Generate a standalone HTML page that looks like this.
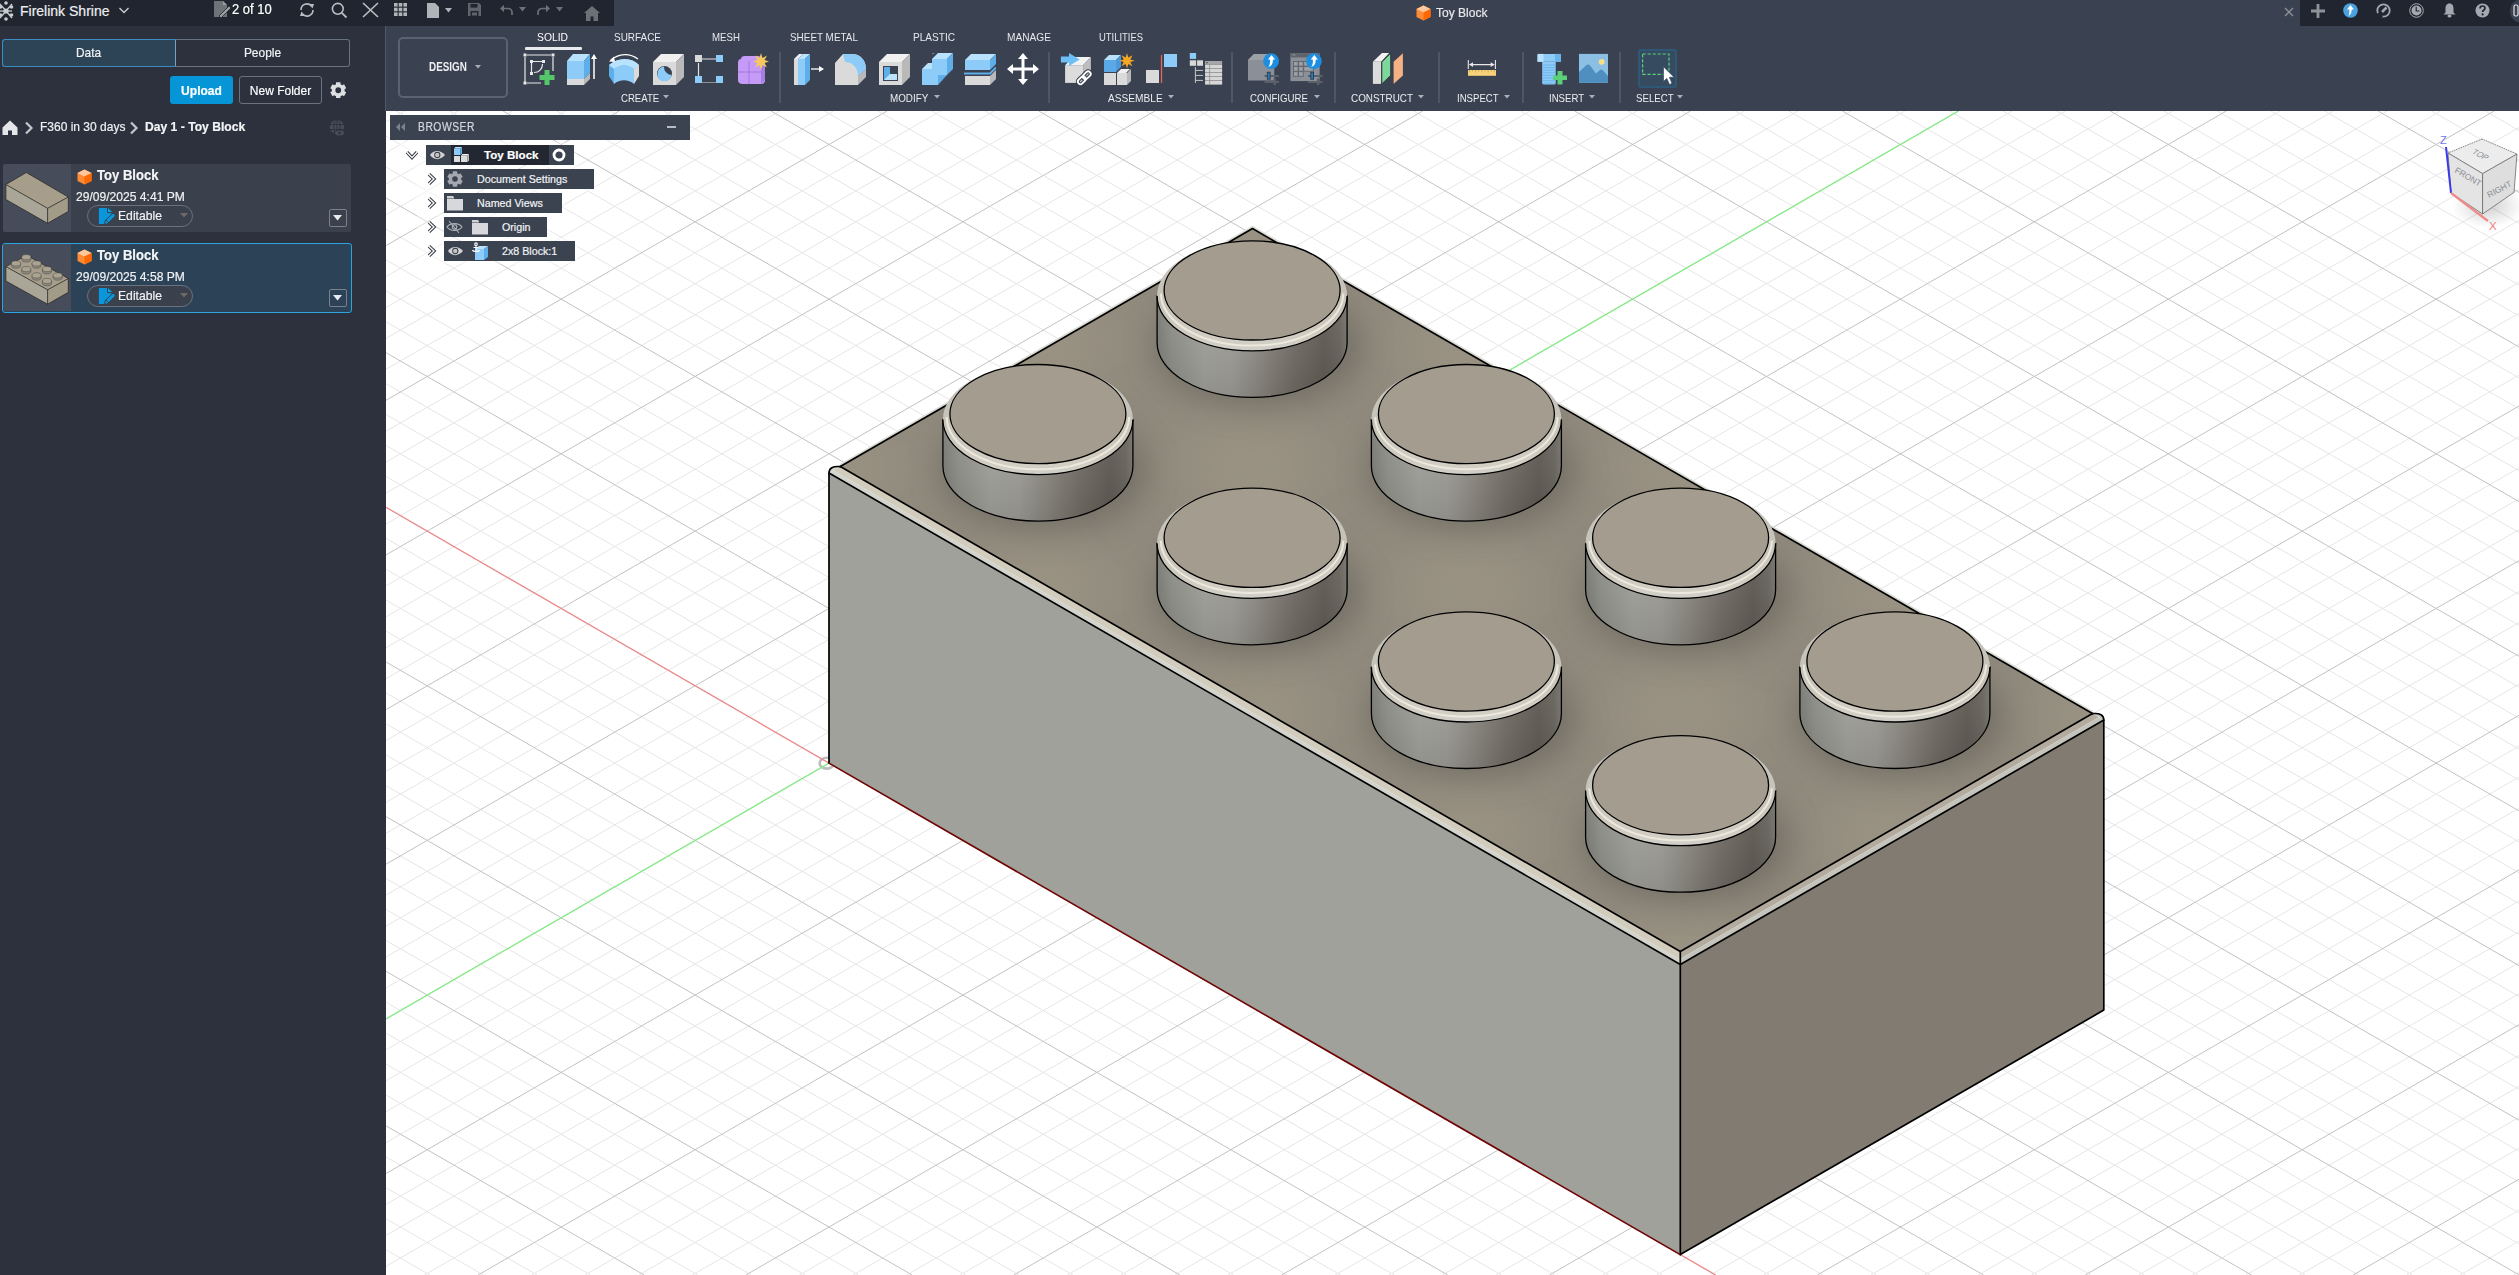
<!DOCTYPE html>
<html><head><meta charset="utf-8"><title>Toy Block</title>
<style>
html,body{margin:0;padding:0;}
body{width:2519px;height:1275px;overflow:hidden;background:#2c313d;font-family:"Liberation Sans",sans-serif;}
#root{position:relative;width:2519px;height:1275px;overflow:hidden;}
.abs{position:absolute;}
#topbar{position:absolute;left:0;top:0;width:2519px;height:26px;background:#20252f;}
#tabzone{position:absolute;left:614px;top:0;width:1686px;height:26px;background:#3a4150;}
#leftpanel{position:absolute;left:0;top:26px;width:386px;height:1249px;background:#2c313d;}
#toolbar{position:absolute;left:386px;top:26px;width:2133px;height:85px;background:#3a4150;}
#tbline{position:absolute;left:385px;top:26px;width:1px;height:85px;background:#505867;}
.t{position:absolute;white-space:nowrap;color:#fff;-webkit-text-stroke:0.2px currentColor;}

</style></head>
<body>
<div id="root">
<svg width="2133" height="1164" viewBox="386 111 2133 1164" style="position:absolute;left:386px;top:111px;display:block">
<defs>
<linearGradient id="studside" x1="0" y1="0" x2="1" y2="0"><stop offset="0" stop-color="#7a7a74"/><stop offset="0.08" stop-color="#8e8e88"/><stop offset="0.25" stop-color="#a1a19b"/><stop offset="0.4" stop-color="#9e9d97"/><stop offset="0.55" stop-color="#8a877f"/><stop offset="0.72" stop-color="#716c64"/><stop offset="0.88" stop-color="#5f5a53"/><stop offset="0.96" stop-color="#67635c"/><stop offset="1" stop-color="#77736c"/></linearGradient>
<linearGradient id="studshade" x1="0" y1="0" x2="0" y2="1"><stop offset="0" stop-color="#fff" stop-opacity="0.06"/><stop offset="1" stop-color="#000" stop-opacity="0.1"/></linearGradient>
<linearGradient id="ring" x1="0" y1="0" x2="0" y2="1"><stop offset="0" stop-color="#c2c2bc"/><stop offset="0.6" stop-color="#c8c4b9"/><stop offset="0.9" stop-color="#d2cec3"/><stop offset="1" stop-color="#cfcfc9"/></linearGradient>
</defs>
<rect x="386" y="111" width="2133" height="1164" fill="#ffffff"/>
<path d="M386.0,121.9L404.9,111.0M386.0,152.8L458.4,111.0M386.0,183.8L512.0,111.0M386.0,214.7L565.6,111.0M386.0,276.5L672.7,111.0M386.0,1249.7L429.9,1275.0M386.0,307.5L726.3,111.0M386.0,1218.7L483.5,1275.0M386.0,338.4L779.9,111.0M386.0,1187.8L537.0,1275.0M386.0,369.3L833.5,111.0M386.0,1156.9L590.6,1275.0M386.0,431.2L940.6,111.0M386.0,1095.0L697.8,1275.0M386.0,462.1L994.2,111.0M386.0,1064.1L751.3,1275.0M386.0,493.1L1047.7,111.0M386.0,1033.1L804.9,1275.0M386.0,524.0L1101.3,111.0M386.0,1002.2L858.5,1275.0M386.0,585.8L1208.5,111.0M386.0,940.4L965.6,1275.0M386.0,616.8L1262.0,111.0M386.0,909.4L1019.2,1275.0M386.0,647.7L1315.6,111.0M386.0,878.5L1072.8,1275.0M386.0,678.6L1369.2,111.0M386.0,847.6L1126.3,1275.0M386.0,740.5L1476.3,111.0M386.0,785.7L1233.5,1275.0M386.0,771.4L1529.9,111.0M386.0,754.8L1287.1,1275.0M386.0,802.4L1583.5,111.0M386.0,723.8L1340.6,1275.0M386.0,833.3L1637.0,111.0M386.0,692.9L1394.2,1275.0M386.0,895.1L1744.2,111.0M386.0,631.1L1501.3,1275.0M386.0,926.1L1797.8,111.0M386.0,600.1L1554.9,1275.0M386.0,957.0L1851.3,111.0M386.0,569.2L1608.5,1275.0M386.0,987.9L1904.9,111.0M386.0,538.3L1662.1,1275.0M386.0,1049.8L2012.0,111.0M386.0,476.4L1769.2,1275.0M386.0,1080.7L2065.6,111.0M386.0,445.5L1822.8,1275.0M386.0,1111.7L2119.2,111.0M386.0,414.5L1876.4,1275.0M386.0,1142.6L2172.8,111.0M386.0,383.6L1929.9,1275.0M386.0,1204.4L2279.9,111.0M386.0,321.8L2037.1,1275.0M386.0,1235.4L2333.5,111.0M386.0,290.8L2090.6,1275.0M386.0,1266.3L2387.0,111.0M386.0,259.9L2144.2,1275.0M424.5,1275.0L2440.6,111.0M386.0,229.0L2197.8,1275.0M531.7,1275.0L2519.0,127.6M386.0,167.1L2304.9,1275.0M585.2,1275.0L2519.0,158.5M386.0,136.2L2358.5,1275.0M638.8,1275.0L2519.0,189.5M396.0,111.0L2412.1,1275.0M692.4,1275.0L2519.0,220.4M449.5,111.0L2465.6,1275.0M799.5,1275.0L2519.0,282.3M556.7,111.0L2519.0,1243.9M853.1,1275.0L2519.0,313.2M610.3,111.0L2519.0,1213.0M906.7,1275.0L2519.0,344.1M663.8,111.0L2519.0,1182.1M960.2,1275.0L2519.0,375.0M717.4,111.0L2519.0,1151.2M1067.4,1275.0L2519.0,436.9M824.5,111.0L2519.0,1089.3M1121.0,1275.0L2519.0,467.8M878.1,111.0L2519.0,1058.4M1174.5,1275.0L2519.0,498.8M931.7,111.0L2519.0,1027.4M1228.1,1275.0L2519.0,529.7M985.3,111.0L2519.0,996.5M1335.2,1275.0L2519.0,591.6M1092.4,111.0L2519.0,934.6M1388.8,1275.0L2519.0,622.5M1146.0,111.0L2519.0,903.7M1442.4,1275.0L2519.0,653.4M1199.6,111.0L2519.0,872.8M1496.0,1275.0L2519.0,684.3M1253.1,111.0L2519.0,841.9M1603.1,1275.0L2519.0,746.2M1360.3,111.0L2519.0,780.0M1656.7,1275.0L2519.0,777.1M1413.8,111.0L2519.0,749.1M1710.3,1275.0L2519.0,808.1M1467.4,111.0L2519.0,718.1M1763.8,1275.0L2519.0,839.0M1521.0,111.0L2519.0,687.2M1871.0,1275.0L2519.0,900.9M1628.1,111.0L2519.0,625.3M1924.5,1275.0L2519.0,931.8M1681.7,111.0L2519.0,594.4M1978.1,1275.0L2519.0,962.7M1735.3,111.0L2519.0,563.5M2031.7,1275.0L2519.0,993.6M1788.9,111.0L2519.0,532.6M2138.8,1275.0L2519.0,1055.5M1896.0,111.0L2519.0,470.7M2192.4,1275.0L2519.0,1086.4M1949.6,111.0L2519.0,439.8M2246.0,1275.0L2519.0,1117.4M2003.1,111.0L2519.0,408.8M2299.5,1275.0L2519.0,1148.3M2056.7,111.0L2519.0,377.9M2406.7,1275.0L2519.0,1210.2M2163.9,111.0L2519.0,316.0M2460.3,1275.0L2519.0,1241.1M2217.4,111.0L2519.0,285.1M2513.8,1275.0L2519.0,1272.0M2271.0,111.0L2519.0,254.2M2324.6,111.0L2519.0,223.3M2431.7,111.0L2519.0,161.4M2485.3,111.0L2519.0,130.5" stroke="#e6e6e6" stroke-width="1" fill="none"/>
<path d="M386.0,245.6L619.2,111.0M386.0,400.3L887.0,111.0M386.0,1125.9L644.2,1275.0M386.0,554.9L1154.9,111.0M386.0,971.3L912.1,1275.0M386.0,709.6L1422.7,111.0M386.0,816.6L1179.9,1275.0M386.0,864.2L1690.6,111.0M386.0,662.0L1447.8,1275.0M386.0,1018.9L1958.5,111.0M386.0,507.3L1715.6,1275.0M386.0,1173.5L2226.3,111.0M386.0,352.7L1983.5,1275.0M478.1,1275.0L2494.2,111.0M386.0,198.0L2251.4,1275.0M745.9,1275.0L2519.0,251.3M503.1,111.0L2519.0,1274.9M1013.8,1275.0L2519.0,406.0M771.0,111.0L2519.0,1120.2M1281.7,1275.0L2519.0,560.6M1038.8,111.0L2519.0,965.6M1549.5,1275.0L2519.0,715.3M1306.7,111.0L2519.0,810.9M1817.4,1275.0L2519.0,869.9M1574.6,111.0L2519.0,656.3M2085.3,1275.0L2519.0,1024.6M1842.4,111.0L2519.0,501.6M2353.1,1275.0L2519.0,1179.2M2110.3,111.0L2519.0,347.0M2378.1,111.0L2519.0,192.3" stroke="#c2c2c2" stroke-width="1" fill="none"/>
<ellipse cx="826.8" cy="763.2" rx="7.2" ry="5.4" stroke="#bdbdbd" stroke-width="2.6" fill="none"/>
<path d="M386.0,507.3L1715.6,1275.0" stroke="#f08c8c" stroke-width="1.3" fill="none"/>
<path d="M386.0,1018.9L1958.5,111.0" stroke="#86ee86" stroke-width="1.3" fill="none"/>
<polygon points="829.0,763.1 1680.3,1254.6 1680.3,964.6 829.0,473.1" fill="#a0a19b"/>
<polygon points="1680.3,1254.6 2103.8,1010.1 2103.8,720.1 1680.3,964.6" fill="#827b71"/>
<polygon points="840.3,466.6 1680.3,951.6 1680.3,959.7 833.3,470.6" fill="#d2ccbd"/>
<polygon points="833.3,470.6 1680.3,959.7 1680.3,964.6 829.0,473.1" fill="#d3d3ce"/>
<polygon points="1680.3,951.6 2092.5,713.6 2098.7,717.2 1680.3,958.7" fill="#b2ab9e"/>
<polygon points="1680.3,958.7 2098.7,717.2 2103.8,720.1 1680.3,964.6" fill="#c4c4bd"/>
<path d="M829.0,473.1 Q829.0,465.6 840.3,466.6 Z" fill="#d3d3ce"/>
<path d="M2103.8,720.1 Q2103.8,712.6 2092.5,713.6 Z" fill="#c4c4bd"/>
<polygon points="840.3,466.6 1252.5,228.6 2092.5,713.6 1680.3,951.6" fill="#8e887c"/>
<clipPath id="topclip"><polygon points="840.3,466.6 1252.5,228.6 2092.5,713.6 1680.3,951.6"/></clipPath>
<filter id="blur14" x="-50%" y="-50%" width="200%" height="200%"><feGaussianBlur stdDeviation="16"/></filter>
<filter id="blur30" x="-50%" y="-50%" width="200%" height="200%"><feGaussianBlur stdDeviation="40"/></filter>
<g clip-path="url(#topclip)"><ellipse cx="823.6" cy="466.6" rx="85" ry="50" fill="#9d9585" filter="url(#blur30)"/><ellipse cx="1037.9" cy="342.9" rx="85" ry="50" fill="#9d9585" filter="url(#blur30)"/><ellipse cx="1252.1" cy="219.2" rx="85" ry="50" fill="#9d9585" filter="url(#blur30)"/><ellipse cx="1037.9" cy="590.3" rx="85" ry="50" fill="#9d9585" filter="url(#blur30)"/><ellipse cx="1252.1" cy="466.6" rx="85" ry="50" fill="#9d9585" filter="url(#blur30)"/><ellipse cx="1466.4" cy="342.9" rx="85" ry="50" fill="#9d9585" filter="url(#blur30)"/><ellipse cx="1252.1" cy="714.0" rx="85" ry="50" fill="#9d9585" filter="url(#blur30)"/><ellipse cx="1466.4" cy="590.3" rx="85" ry="50" fill="#9d9585" filter="url(#blur30)"/><ellipse cx="1680.6" cy="466.6" rx="85" ry="50" fill="#9d9585" filter="url(#blur30)"/><ellipse cx="1466.4" cy="837.7" rx="85" ry="50" fill="#9d9585" filter="url(#blur30)"/><ellipse cx="1680.6" cy="714.0" rx="85" ry="50" fill="#9d9585" filter="url(#blur30)"/><ellipse cx="1894.9" cy="590.3" rx="85" ry="50" fill="#9d9585" filter="url(#blur30)"/><ellipse cx="1680.6" cy="961.4" rx="85" ry="50" fill="#9d9585" filter="url(#blur30)"/><ellipse cx="1894.9" cy="837.7" rx="85" ry="50" fill="#9d9585" filter="url(#blur30)"/><ellipse cx="2109.2" cy="714.0" rx="85" ry="50" fill="#9d9585" filter="url(#blur30)"/><ellipse cx="1043.9" cy="470.6" rx="104" ry="60" fill="#6c675e" opacity="0.75" filter="url(#blur14)"/><ellipse cx="1258.1" cy="346.9" rx="104" ry="60" fill="#6c675e" opacity="0.75" filter="url(#blur14)"/><ellipse cx="1258.1" cy="594.3" rx="104" ry="60" fill="#6c675e" opacity="0.75" filter="url(#blur14)"/><ellipse cx="1472.4" cy="470.6" rx="104" ry="60" fill="#6c675e" opacity="0.75" filter="url(#blur14)"/><ellipse cx="1472.4" cy="718.0" rx="104" ry="60" fill="#6c675e" opacity="0.75" filter="url(#blur14)"/><ellipse cx="1686.6" cy="594.3" rx="104" ry="60" fill="#6c675e" opacity="0.75" filter="url(#blur14)"/><ellipse cx="1686.6" cy="841.7" rx="104" ry="60" fill="#6c675e" opacity="0.75" filter="url(#blur14)"/><ellipse cx="1900.9" cy="718.0" rx="104" ry="60" fill="#6c675e" opacity="0.75" filter="url(#blur14)"/></g>
<path d="M840.3,464.8L1252.5,226.8L2092.5,711.8" stroke="#dcdcd6" stroke-width="2" fill="none" stroke-linejoin="round"/>
<path d="M840.3,466.6L1680.3,951.6L2092.5,713.6" stroke="#000" stroke-width="1.7" fill="none" stroke-linejoin="round" stroke-linecap="round"/>
<path d="M840.3,466.6L1252.5,228.6L2092.5,713.6" stroke="#000" stroke-width="1.7" fill="none" stroke-linejoin="round" stroke-linecap="round"/>
<path d="M829.0,473.1L1680.3,964.6L2103.8,720.1" stroke="#000" stroke-width="1.7" fill="none" stroke-linejoin="round" stroke-linecap="round"/>
<path d="M840.3,466.6 Q829.0,465.6 829.0,473.1 L829.0,763.1" stroke="#000" stroke-width="1.7" fill="none" stroke-linejoin="round" stroke-linecap="round"/>
<path d="M2092.5,713.6 Q2103.8,712.6 2103.8,720.1 L2103.8,1010.1L1680.3,1254.6" stroke="#000" stroke-width="1.7" fill="none" stroke-linejoin="round" stroke-linecap="round"/>
<path d="M1680.3,951.6L1680.3,1254.6" stroke="#000" stroke-width="1.7" fill="none" stroke-linejoin="round" stroke-linecap="round"/>
<path d="M829.0,763.1L1680.3,1254.6" stroke="#6e0606" stroke-width="1.6" fill="none"/>
<path d="M1157.1,295.9L1157.1,342.4A95.0,55.0 0 0 0 1347.1,342.4L1347.1,295.9Z" fill="url(#studside)"/>
<path d="M1157.1,295.9L1157.1,342.4A95.0,55.0 0 0 0 1347.1,342.4L1347.1,295.9Z" fill="url(#studshade)" stroke="#000" stroke-width="1.3"/>
<ellipse cx="1252.1" cy="295.9" rx="95.0" ry="55.0" fill="url(#ring)"/>
<path d="M1157.1,295.9A95.0,55.0 0 0 0 1347.1,295.9" stroke="#000" stroke-width="1.3" fill="none"/>
<path d="M1160.9,293.4A91.2,52.2 0 0 0 1343.3,293.4" stroke="#ece8dd" stroke-width="2" fill="none"/>
<ellipse cx="1252.1" cy="290.4" rx="88.0" ry="49.6" fill="#a39c8f" stroke="#000" stroke-width="1.3"/>
<path d="M942.9,419.6L942.9,466.1A95.0,55.0 0 0 0 1132.9,466.1L1132.9,419.6Z" fill="url(#studside)"/>
<path d="M942.9,419.6L942.9,466.1A95.0,55.0 0 0 0 1132.9,466.1L1132.9,419.6Z" fill="url(#studshade)" stroke="#000" stroke-width="1.3"/>
<ellipse cx="1037.9" cy="419.6" rx="95.0" ry="55.0" fill="url(#ring)"/>
<path d="M942.9,419.6A95.0,55.0 0 0 0 1132.9,419.6" stroke="#000" stroke-width="1.3" fill="none"/>
<path d="M946.7,417.1A91.2,52.2 0 0 0 1129.1,417.1" stroke="#ece8dd" stroke-width="2" fill="none"/>
<ellipse cx="1037.9" cy="414.1" rx="88.0" ry="49.6" fill="#a39c8f" stroke="#000" stroke-width="1.3"/>
<path d="M1371.4,419.6L1371.4,466.1A95.0,55.0 0 0 0 1561.4,466.1L1561.4,419.6Z" fill="url(#studside)"/>
<path d="M1371.4,419.6L1371.4,466.1A95.0,55.0 0 0 0 1561.4,466.1L1561.4,419.6Z" fill="url(#studshade)" stroke="#000" stroke-width="1.3"/>
<ellipse cx="1466.4" cy="419.6" rx="95.0" ry="55.0" fill="url(#ring)"/>
<path d="M1371.4,419.6A95.0,55.0 0 0 0 1561.4,419.6" stroke="#000" stroke-width="1.3" fill="none"/>
<path d="M1375.2,417.1A91.2,52.2 0 0 0 1557.6,417.1" stroke="#ece8dd" stroke-width="2" fill="none"/>
<ellipse cx="1466.4" cy="414.1" rx="88.0" ry="49.6" fill="#a39c8f" stroke="#000" stroke-width="1.3"/>
<path d="M1585.6,543.3L1585.6,589.8A95.0,55.0 0 0 0 1775.6,589.8L1775.6,543.3Z" fill="url(#studside)"/>
<path d="M1585.6,543.3L1585.6,589.8A95.0,55.0 0 0 0 1775.6,589.8L1775.6,543.3Z" fill="url(#studshade)" stroke="#000" stroke-width="1.3"/>
<ellipse cx="1680.6" cy="543.3" rx="95.0" ry="55.0" fill="url(#ring)"/>
<path d="M1585.6,543.3A95.0,55.0 0 0 0 1775.6,543.3" stroke="#000" stroke-width="1.3" fill="none"/>
<path d="M1589.4,540.8A91.2,52.2 0 0 0 1771.8,540.8" stroke="#ece8dd" stroke-width="2" fill="none"/>
<ellipse cx="1680.6" cy="537.8" rx="88.0" ry="49.6" fill="#a39c8f" stroke="#000" stroke-width="1.3"/>
<path d="M1157.1,543.3L1157.1,589.8A95.0,55.0 0 0 0 1347.1,589.8L1347.1,543.3Z" fill="url(#studside)"/>
<path d="M1157.1,543.3L1157.1,589.8A95.0,55.0 0 0 0 1347.1,589.8L1347.1,543.3Z" fill="url(#studshade)" stroke="#000" stroke-width="1.3"/>
<ellipse cx="1252.1" cy="543.3" rx="95.0" ry="55.0" fill="url(#ring)"/>
<path d="M1157.1,543.3A95.0,55.0 0 0 0 1347.1,543.3" stroke="#000" stroke-width="1.3" fill="none"/>
<path d="M1160.9,540.8A91.2,52.2 0 0 0 1343.3,540.8" stroke="#ece8dd" stroke-width="2" fill="none"/>
<ellipse cx="1252.1" cy="537.8" rx="88.0" ry="49.6" fill="#a39c8f" stroke="#000" stroke-width="1.3"/>
<path d="M1371.4,667.0L1371.4,713.5A95.0,55.0 0 0 0 1561.4,713.5L1561.4,667.0Z" fill="url(#studside)"/>
<path d="M1371.4,667.0L1371.4,713.5A95.0,55.0 0 0 0 1561.4,713.5L1561.4,667.0Z" fill="url(#studshade)" stroke="#000" stroke-width="1.3"/>
<ellipse cx="1466.4" cy="667.0" rx="95.0" ry="55.0" fill="url(#ring)"/>
<path d="M1371.4,667.0A95.0,55.0 0 0 0 1561.4,667.0" stroke="#000" stroke-width="1.3" fill="none"/>
<path d="M1375.2,664.5A91.2,52.2 0 0 0 1557.6,664.5" stroke="#ece8dd" stroke-width="2" fill="none"/>
<ellipse cx="1466.4" cy="661.5" rx="88.0" ry="49.6" fill="#a39c8f" stroke="#000" stroke-width="1.3"/>
<path d="M1799.9,667.0L1799.9,713.5A95.0,55.0 0 0 0 1989.9,713.5L1989.9,667.0Z" fill="url(#studside)"/>
<path d="M1799.9,667.0L1799.9,713.5A95.0,55.0 0 0 0 1989.9,713.5L1989.9,667.0Z" fill="url(#studshade)" stroke="#000" stroke-width="1.3"/>
<ellipse cx="1894.9" cy="667.0" rx="95.0" ry="55.0" fill="url(#ring)"/>
<path d="M1799.9,667.0A95.0,55.0 0 0 0 1989.9,667.0" stroke="#000" stroke-width="1.3" fill="none"/>
<path d="M1803.7,664.5A91.2,52.2 0 0 0 1986.1,664.5" stroke="#ece8dd" stroke-width="2" fill="none"/>
<ellipse cx="1894.9" cy="661.5" rx="88.0" ry="49.6" fill="#a39c8f" stroke="#000" stroke-width="1.3"/>
<path d="M1585.6,790.7L1585.6,837.2A95.0,55.0 0 0 0 1775.6,837.2L1775.6,790.7Z" fill="url(#studside)"/>
<path d="M1585.6,790.7L1585.6,837.2A95.0,55.0 0 0 0 1775.6,837.2L1775.6,790.7Z" fill="url(#studshade)" stroke="#000" stroke-width="1.3"/>
<ellipse cx="1680.6" cy="790.7" rx="95.0" ry="55.0" fill="url(#ring)"/>
<path d="M1585.6,790.7A95.0,55.0 0 0 0 1775.6,790.7" stroke="#000" stroke-width="1.3" fill="none"/>
<path d="M1589.4,788.2A91.2,52.2 0 0 0 1771.8,788.2" stroke="#ece8dd" stroke-width="2" fill="none"/>
<ellipse cx="1680.6" cy="785.2" rx="88.0" ry="49.6" fill="#a39c8f" stroke="#000" stroke-width="1.3"/>
</svg>
<div id="topbar"></div>
<div id="tabzone"></div>
<div id="leftpanel"></div>
<div id="toolbar"></div>
<div id="tbline"></div>
<!-- TOPBAR -->
<svg class="abs" style="left:0;top:0" width="16" height="22" viewBox="0 0 16 22">
 <g stroke="#c9ccd1" stroke-width="1.3" fill="none"><line x1="6" y1="11" x2="0" y2="4"/><line x1="6" y1="11" x2="12" y2="4"/><line x1="6" y1="11" x2="0" y2="18"/><line x1="6" y1="11" x2="12" y2="18"/><line x1="0" y1="11" x2="12" y2="11"/></g>
 <g fill="#c9ccd1"><circle cx="6" cy="11" r="2.6"/><circle cx="6" cy="3" r="1.8"/><circle cx="6" cy="19" r="1.8"/><circle cx="11.5" cy="7" r="1.8"/><circle cx="11.5" cy="15" r="1.8"/><circle cx="0.5" cy="7" r="1.8"/><circle cx="0.5" cy="15" r="1.8"/></g>
</svg>
<div class="t" style="left:20px;top:1px;font-size:14px;line-height:20px;color:#eceef1">Firelink Shrine</div>
<svg class="abs" style="left:118px;top:5px" width="12" height="10" viewBox="0 0 12 10"><path d="M1.5 3 L6 7.5 L10.5 3" stroke="#c9ccd1" stroke-width="1.4" fill="none"/></svg>
<svg class="abs" style="left:213px;top:0" width="20" height="18" viewBox="0 0 20 18"><path d="M1 1 H10 L14 5 V17 H1 Z" fill="#6f7276"/><path d="M10 1 V5 H14" fill="#9a9da1"/><path d="M6 16 L16 6 L18 8 L8 18 Z" fill="#9a9da1" stroke="#20252f" stroke-width="0.8"/></svg>
<div class="t" style="left:231.5px;top:-1.5px;font-size:14px;line-height:20px;color:#ffffff;transform:scaleX(0.93);transform-origin:0 0">2 of 10</div>
<svg class="abs" style="left:298px;top:2px" width="18" height="16" viewBox="0 0 18 16"><g stroke="#b9bcc1" stroke-width="1.6" fill="none"><path d="M3 8 A6 6 0 0 1 13.5 4"/><path d="M15 8 A6 6 0 0 1 4.5 12"/></g><path d="M11 2 L16 2 L14.5 6.5 Z" fill="#b9bcc1"/><path d="M7 14 L2 14 L3.5 9.5 Z" fill="#b9bcc1"/></svg>
<svg class="abs" style="left:331px;top:2px" width="17" height="17" viewBox="0 0 17 17"><circle cx="6.8" cy="6.8" r="5.4" stroke="#b9bcc1" stroke-width="1.6" fill="none"/><line x1="10.8" y1="10.8" x2="15.5" y2="15.5" stroke="#b9bcc1" stroke-width="1.8"/></svg>
<svg class="abs" style="left:362px;top:2px" width="17" height="16" viewBox="0 0 17 16"><path d="M1 1 L16 15 M16 1 L1 15" stroke="#b9bcc1" stroke-width="1.7"/></svg>
<svg class="abs" style="left:394px;top:3px" width="14" height="14" viewBox="0 0 14 14"><g fill="#b0b3b8"><rect x="0" y="0" width="3.6" height="3.6"/><rect x="4.7" y="0" width="3.6" height="3.6"/><rect x="9.4" y="0" width="3.6" height="3.6"/><rect x="0" y="4.7" width="3.6" height="3.6"/><rect x="4.7" y="4.7" width="3.6" height="3.6"/><rect x="9.4" y="4.7" width="3.6" height="3.6"/><rect x="0" y="9.4" width="3.6" height="3.6"/><rect x="4.7" y="9.4" width="3.6" height="3.6"/><rect x="9.4" y="9.4" width="3.6" height="3.6"/></g></svg>
<svg class="abs" style="left:427px;top:3px" width="26" height="15" viewBox="0 0 26 15"><path d="M0 0 H8 L12 4 V15 H0 Z" fill="#b0b3b8"/><path d="M18 5 H25 L21.5 9.5 Z" fill="#b0b3b8"/></svg>
<svg class="abs" style="left:468px;top:3px" width="14" height="14" viewBox="0 0 14 14"><path d="M0 0 H11 L13 2 V13 H0 Z" fill="#60646b"/><rect x="2.5" y="1" width="7" height="3.6" fill="#20252f"/><rect x="2.5" y="8" width="8" height="5" fill="#20252f"/><rect x="4" y="9.5" width="5" height="3" fill="#60646b"/></svg>
<svg class="abs" style="left:500px;top:4px" width="28" height="12" viewBox="0 0 28 12"><path d="M3 4.5 H8 A4 4 0 0 1 12 8.5 V11" stroke="#6c7077" stroke-width="1.7" fill="none"/><path d="M0 4.5 L4 0.8 V8.2 Z" fill="#6c7077"/><path d="M19 3 H26 L22.5 7.5 Z" fill="#6c7077"/></svg>
<svg class="abs" style="left:537px;top:4px" width="28" height="12" viewBox="0 0 28 12"><path d="M10 4.5 H5 A4 4 0 0 0 1 8.5 V11" stroke="#6c7077" stroke-width="1.7" fill="none"/><path d="M13 4.5 L9 0.8 V8.2 Z" fill="#6c7077"/><path d="M19 3 H26 L22.5 7.5 Z" fill="#6c7077"/></svg>
<svg class="abs" style="left:584px;top:6px" width="16" height="15" viewBox="0 0 16 15"><path d="M8 0 L16 7 H14 V15 H9.5 V10.5 H6.5 V15 H2 V7 H0 Z" fill="#6c7077"/></svg>
<!-- title tab -->
<svg class="abs" style="left:1416px;top:5px" width="15" height="16" viewBox="0 0 15 16"><path d="M7.5 0.5 L14.5 4 V12 L7.5 15.5 L0.5 12 V4 Z" fill="#ff8a36"/><path d="M7.5 0.5 L14.5 4 L7.5 7.5 L0.5 4 Z" fill="#ffc79e"/><path d="M7.5 7.5 L14.5 4 V12 L7.5 15.5 Z" fill="#ff6800"/></svg>
<div class="t" style="left:1436px;top:3px;font-size:13px;line-height:20px;color:#e6e8eb;transform:scaleX(0.925);transform-origin:0 0">Toy Block</div>
<svg class="abs" style="left:2284px;top:7px" width="10" height="10" viewBox="0 0 10 10"><path d="M1 1 L9 9 M9 1 L1 9" stroke="#8d9199" stroke-width="1.3"/></svg>
<!-- right icons -->
<svg class="abs" style="left:2311px;top:4px" width="14" height="14" viewBox="0 0 14 14"><path d="M5.6 0 H8.4 V5.6 H14 V8.4 H8.4 V14 H5.6 V8.4 H0 V5.6 H5.6 Z" fill="#8f9399"/></svg>
<svg class="abs" style="left:2343px;top:3px" width="15" height="15" viewBox="0 0 15 15"><circle cx="7.5" cy="7.5" r="7.3" fill="#4aa3e0"/><path d="M7.5 2 L11 6.5 H8.7 C8.7 9 8 11.5 5.5 13 C6.6 11 6.4 8.5 6.4 6.5 H4 Z" fill="#fff"/></svg>
<svg class="abs" style="left:2376px;top:3px" width="15" height="15" viewBox="0 0 15 15"><circle cx="7.5" cy="7.5" r="6.2" stroke="#a4a8b0" stroke-width="1.8" fill="none"/><path d="M6 9 L10.5 4.5" stroke="#a4a8b0" stroke-width="2.5"/><rect x="0" y="10" width="6" height="5" fill="#20252f" transform="rotate(-20 3 12)"/></svg>
<svg class="abs" style="left:2409px;top:3px" width="15" height="15" viewBox="0 0 15 15"><circle cx="7.5" cy="7.5" r="6.8" stroke="#a4a8b0" stroke-width="1" fill="none"/><circle cx="7.5" cy="7.5" r="5" fill="#a4a8b0"/><path d="M7.2 3.8 V8 H10.5" stroke="#20252f" stroke-width="1.2" fill="none"/></svg>
<svg class="abs" style="left:2443px;top:3px" width="13" height="15" viewBox="0 0 13 15"><path d="M6.5 0.5 C9.5 0.5 10.5 3 10.5 5.5 V9.5 L12.5 11.5 H0.5 L2.5 9.5 V5.5 C2.5 3 3.5 0.5 6.5 0.5 Z" fill="#a4a8b0"/><ellipse cx="6.5" cy="13" rx="2" ry="1.5" fill="#a4a8b0"/></svg>
<svg class="abs" style="left:2475px;top:3px" width="15" height="15" viewBox="0 0 15 15"><circle cx="7.5" cy="7.5" r="7" fill="#a4a8b0"/><path d="M5 5.5 C5 3.8 6 3 7.5 3 C9 3 10 4 10 5.2 C10 7 7.6 7 7.6 9" stroke="#20252f" stroke-width="1.7" fill="none"/><circle cx="7.6" cy="11.4" r="1.1" fill="#20252f"/></svg>
<svg class="abs" style="left:2508px;top:0" width="11" height="22" viewBox="0 0 11 22"><circle cx="14" cy="11" r="12" fill="#3a4150"/><rect x="6" y="5" width="4" height="11" rx="1.5" stroke="#e0e0e0" stroke-width="1.2" fill="none"/></svg>
<!-- LEFT PANEL -->
<div class="abs" style="left:2px;top:39px;width:172px;height:26px;background:#2d4356;border:1px solid #3a8ec2;border-right:none;border-radius:3px 0 0 3px"></div>
<div class="abs" style="left:175px;top:39px;width:173px;height:26px;border:1px solid #667181;border-left:1px solid #6fa3c9;border-radius:0 3px 3px 0"></div>
<div class="t" style="left:2px;top:44.1px;width:173px;text-align:center;font-size:13.5px;line-height:17px;color:#f2f3f5;transform:scaleX(0.88)">Data</div>
<div class="t" style="left:175px;top:44.1px;width:175px;text-align:center;font-size:13.5px;line-height:17px;color:#f2f3f5;transform:scaleX(0.885)">People</div>
<div class="abs" style="left:170px;top:76px;width:63px;height:28px;background:#0696d7;border-radius:3px"></div>
<div class="t" style="left:170px;top:81.8px;width:63px;text-align:center;font-size:13px;font-weight:bold;line-height:17px;color:#fff;transform:scaleX(0.925)">Upload</div>
<div class="abs" style="left:239px;top:76px;width:81px;height:26px;border:1px solid #6a7280;border-radius:3px"></div>
<div class="t" style="left:239px;top:82px;width:83px;text-align:center;font-size:13.5px;line-height:17px;color:#fff;transform:scaleX(0.89)">New Folder</div>
<svg class="abs" style="left:329.5px;top:81.8px" width="16.5" height="16.5" viewBox="0 0 16 16"><path d="M5.85,2.18 L5.85,0.29 L10.15,0.29 L10.15,2.18 A6.2,6.2 0 0 1 11.96,3.23 L13.60,2.29 L15.75,6.01 L14.11,6.95 A6.2,6.2 0 0 1 14.11,9.05 L15.75,9.99 L13.60,13.71 L11.96,12.77 A6.2,6.2 0 0 1 10.15,13.82 L10.15,15.71 L5.85,15.71 L5.85,13.82 A6.2,6.2 0 0 1 4.04,12.77 L2.40,13.71 L0.25,9.99 L1.89,9.05 A6.2,6.2 0 0 1 1.89,6.95 L0.25,6.01 L2.40,2.29 L4.04,3.23 A6.2,6.2 0 0 1 5.85,2.18Z M10.80,8.00 A2.8,2.8 0 1 0 5.20,8.00 A2.8,2.8 0 1 0 10.80,8.00 Z" fill="#dcdee1" fill-rule="evenodd"/></svg>
<svg class="abs" style="left:2px;top:120px" width="16" height="15" viewBox="0 0 16 15"><path d="M8 0.5 L15.5 7.5 V15 H10 V10.5 H6 V15 H0.5 V7.5 Z" fill="#e4e6e9"/></svg>
<svg class="abs" style="left:24px;top:121px" width="10" height="14" viewBox="0 0 10 14"><path d="M2 1.5 L7.5 7 L2 12.5" stroke="#c3c6cb" stroke-width="2.2" fill="none"/></svg>
<div class="t" style="left:40px;top:119px;font-size:12.5px;line-height:17px;color:#eef0f2;transform:scaleX(0.96);transform-origin:0 0">F360 in 30 days</div>
<svg class="abs" style="left:129px;top:121px" width="10" height="14" viewBox="0 0 10 14"><path d="M2 1.5 L7.5 7 L2 12.5" stroke="#c3c6cb" stroke-width="2.2" fill="none"/></svg>
<div class="t" style="left:145px;top:119px;font-size:12.5px;line-height:17px;font-weight:bold;color:#f4f5f7;transform:scaleX(0.97);transform-origin:0 0">Day 1 - Toy Block</div>
<svg class="abs" style="left:329px;top:119px" width="17" height="18" viewBox="0 0 17 18"><circle cx="8" cy="8" r="7.2" fill="#474d58"/><g stroke="#2c313d" stroke-width="0.9" fill="none"><ellipse cx="8" cy="8" rx="3.2" ry="7.2"/><line x1="0.8" y1="5.5" x2="15.2" y2="5.5"/><line x1="0.8" y1="10.5" x2="15.2" y2="10.5"/><line x1="8" y1="0.8" x2="8" y2="15.2"/></g><ellipse cx="10.5" cy="14" rx="5.5" ry="3.2" fill="#2c313d"/><ellipse cx="10.5" cy="14" rx="4.6" ry="2.5" fill="#474d58"/><circle cx="10.5" cy="14" r="1.3" fill="#2c313d"/></svg>
<!-- card 1 -->
<div class="abs" style="left:3px;top:164px;width:348px;height:68px;background:#3a404c;border-radius:2px"></div>
<div class="abs" style="left:3px;top:164px;width:68px;height:68px;background:#464c59;border-radius:2px 0 0 2px"></div>
<svg class="abs" style="left:3px;top:164px" width="68" height="68" viewBox="3 164 68 68"><polygon points="5.9,184.5 26.3,172.5 68.3,197 47.6,208.3" fill="#a69d8a"/><polygon points="5.9,184.5 47.6,208.3 47.6,223.3 5.9,199.5" fill="#aaa697"/><polygon points="47.6,208.3 68.3,197 68.3,211.4 47.6,223.3" fill="#a29b88"/><path d="M5.9,184.5 L26.3,172.5 L68.3,197 L68.3,211.4 L47.6,223.3 L5.9,199.5 Z M5.9,184.5 L47.6,208.3 L68.3,197 M47.6,208.3 V223.3" stroke="#222" stroke-width="0.7" fill="none" stroke-linejoin="round"/></svg>
<svg class="abs" style="left:77px;top:169px" width="15" height="16" viewBox="0 0 15 16"><path d="M7.5 0.5 L14.5 4 V12 L7.5 15.5 L0.5 12 V4 Z" fill="#ff8a36"/><path d="M7.5 0.5 L14.5 4 L7.5 7.5 L0.5 4 Z" fill="#ffc79e"/><path d="M7.5 7.5 L14.5 4 V12 L7.5 15.5 Z" fill="#ff6800"/></svg>
<div class="t" style="left:97px;top:167.3px;font-size:14.6px;line-height:17px;font-weight:bold;color:#f4f5f7;transform:scaleX(0.895);transform-origin:0 0">Toy Block</div>
<div class="t" style="left:75.5px;top:188px;font-size:13px;line-height:17px;color:#f0f2f4;transform:scaleX(0.93);transform-origin:0 0">29/09/2025 4:41 PM</div>
<div class="abs" style="left:87px;top:205px;width:104px;height:20px;border:1px solid #6a7280;border-radius:11px"></div>
<svg class="abs" style="left:97px;top:206.0px" width="20" height="20" viewBox="97 206.0 20 20"><g transform="translate(0 0.0)"><path d="M98.9,207.9 H107 V212.9 H111.8 L104.2,224.1 H98.9 Z" fill="#0996da"/><path d="M108,207.9 L112.2,212 H108 Z" fill="#09a0e6"/><g transform="rotate(-45 109.8 218.8)"><rect x="103.3" y="216.9" width="13.2" height="3.8" rx="1.9" fill="#0996da" stroke="#3a404c" stroke-width="0.9"/><path d="M106.2,216.5 V221.1" stroke="#3a404c" stroke-width="0.9"/></g></g></svg>
<div class="t" style="left:118px;top:206.9px;font-size:13.3px;line-height:17px;color:#f0f2f4;transform:scaleX(0.915);transform-origin:0 0">Editable</div>
<svg class="abs" style="left:180px;top:213px" width="8" height="5" viewBox="0 0 8 5"><path d="M0 0 H8 L4 4.5 Z" fill="#6d6a66"/></svg>
<div class="abs" style="left:329px;top:209px;width:16px;height:16px;border:1px solid #7a818d;border-radius:2px"></div>
<svg class="abs" style="left:333px;top:215px" width="9" height="6" viewBox="0 0 9 6"><path d="M0 0 H9 L4.5 5.5 Z" fill="#e8eaed"/></svg>
<!-- card 2 -->
<div class="abs" style="left:2px;top:243px;width:348px;height:68px;background:#2c4256;border:1px solid #2ba3dd;border-radius:3px"></div>
<div class="abs" style="left:3px;top:244px;width:68px;height:67px;background:#464c59;border-radius:2px 0 0 2px"></div>
<svg class="abs" style="left:3px;top:244px" width="68" height="68" viewBox="3 244 68 68"><polygon points="5.9,266.6 26.6,255.3 68.3,278.5 47.6,289.8" fill="#a69d8a"/><polygon points="5.9,266.6 47.6,289.8 47.6,304.2 5.9,281" fill="#aaa697"/><polygon points="47.6,289.8 68.3,278.5 68.3,292.3 47.6,304.2" fill="#a29b88"/><path d="M5.9,266.6 L26.6,255.3 L68.3,278.5 L68.3,292.3 L47.6,304.2 L5.9,281 Z M5.9,266.6 L47.6,289.8 L68.3,278.5 M47.6,289.8 V304.2" stroke="#222" stroke-width="0.7" fill="none" stroke-linejoin="round"/><path d="M21.700000000000003,257.2 V259.4 A4.6,2.6 0 0 0 30.9,259.4 V257.2 Z" fill="#8f8a7f" stroke="#333" stroke-width="0.4"/><ellipse cx="26.3" cy="257.2" rx="4.6" ry="2.6" fill="#aba391" stroke="#333" stroke-width="0.4"/><path d="M11.4,263.4 V265.59999999999997 A4.6,2.6 0 0 0 20.6,265.59999999999997 V263.4 Z" fill="#8f8a7f" stroke="#333" stroke-width="0.4"/><ellipse cx="16" cy="263.4" rx="4.6" ry="2.6" fill="#aba391" stroke="#333" stroke-width="0.4"/><path d="M32.0,263.4 V265.59999999999997 A4.6,2.6 0 0 0 41.2,265.59999999999997 V263.4 Z" fill="#8f8a7f" stroke="#333" stroke-width="0.4"/><ellipse cx="36.6" cy="263.4" rx="4.6" ry="2.6" fill="#aba391" stroke="#333" stroke-width="0.4"/><path d="M21.700000000000003,269.1 V271.3 A4.6,2.6 0 0 0 30.9,271.3 V269.1 Z" fill="#8f8a7f" stroke="#333" stroke-width="0.4"/><ellipse cx="26.3" cy="269.1" rx="4.6" ry="2.6" fill="#aba391" stroke="#333" stroke-width="0.4"/><path d="M42.4,269.1 V271.3 A4.6,2.6 0 0 0 51.6,271.3 V269.1 Z" fill="#8f8a7f" stroke="#333" stroke-width="0.4"/><ellipse cx="47" cy="269.1" rx="4.6" ry="2.6" fill="#aba391" stroke="#333" stroke-width="0.4"/><path d="M32.0,275.4 V277.59999999999997 A4.6,2.6 0 0 0 41.2,277.59999999999997 V275.4 Z" fill="#8f8a7f" stroke="#333" stroke-width="0.4"/><ellipse cx="36.6" cy="275.4" rx="4.6" ry="2.6" fill="#aba391" stroke="#333" stroke-width="0.4"/><path d="M53.1,275.4 V277.59999999999997 A4.6,2.6 0 0 0 62.300000000000004,277.59999999999997 V275.4 Z" fill="#8f8a7f" stroke="#333" stroke-width="0.4"/><ellipse cx="57.7" cy="275.4" rx="4.6" ry="2.6" fill="#aba391" stroke="#333" stroke-width="0.4"/><path d="M42.4,281 V283.2 A4.6,2.6 0 0 0 51.6,283.2 V281 Z" fill="#8f8a7f" stroke="#333" stroke-width="0.4"/><ellipse cx="47" cy="281" rx="4.6" ry="2.6" fill="#aba391" stroke="#333" stroke-width="0.4"/></svg>
<svg class="abs" style="left:77px;top:249px" width="15" height="16" viewBox="0 0 15 16"><path d="M7.5 0.5 L14.5 4 V12 L7.5 15.5 L0.5 12 V4 Z" fill="#ff8a36"/><path d="M7.5 0.5 L14.5 4 L7.5 7.5 L0.5 4 Z" fill="#ffc79e"/><path d="M7.5 7.5 L14.5 4 V12 L7.5 15.5 Z" fill="#ff6800"/></svg>
<div class="t" style="left:97px;top:247.3px;font-size:14.6px;line-height:17px;font-weight:bold;color:#f4f5f7;transform:scaleX(0.895);transform-origin:0 0">Toy Block</div>
<div class="t" style="left:75.5px;top:268px;font-size:13px;line-height:17px;color:#f0f2f4;transform:scaleX(0.93);transform-origin:0 0">29/09/2025 4:58 PM</div>
<div class="abs" style="left:87px;top:285px;width:104px;height:20px;background:#3a404c;border:1px solid #6a7280;border-radius:11px"></div>
<svg class="abs" style="left:97px;top:286.0px" width="20" height="20" viewBox="97 286.0 20 20"><g transform="translate(0 80.0)"><path d="M98.9,207.9 H107 V212.9 H111.8 L104.2,224.1 H98.9 Z" fill="#0996da"/><path d="M108,207.9 L112.2,212 H108 Z" fill="#09a0e6"/><g transform="rotate(-45 109.8 218.8)"><rect x="103.3" y="216.9" width="13.2" height="3.8" rx="1.9" fill="#0996da" stroke="#3a404c" stroke-width="0.9"/><path d="M106.2,216.5 V221.1" stroke="#3a404c" stroke-width="0.9"/></g></g></svg>
<div class="t" style="left:118px;top:286.9px;font-size:13.3px;line-height:17px;color:#f0f2f4;transform:scaleX(0.915);transform-origin:0 0">Editable</div>
<svg class="abs" style="left:180px;top:293px" width="8" height="5" viewBox="0 0 8 5"><path d="M0 0 H8 L4 4.5 Z" fill="#6d6a66"/></svg>
<div class="abs" style="left:329px;top:289px;width:16px;height:16px;border:1px solid #7a818d;border-radius:2px"></div>
<svg class="abs" style="left:333px;top:295px" width="9" height="6" viewBox="0 0 9 6"><path d="M0 0 H9 L4.5 5.5 Z" fill="#e8eaed"/></svg>
<div class="abs" style="left:397.5px;top:36.5px;width:106px;height:57px;border:2px solid #5a6372;border-radius:5px"></div>
<div class="t" style="left:429.0px;top:60.7px;font-size:12.2px;line-height:12.2px;font-weight:bold;color:#eef0f2;transform:scaleX(0.812);transform-origin:0 0;-webkit-text-stroke:0">DESIGN</div>
<svg class="abs" style="left:474.5px;top:65.2px" width="6" height="3.6" viewBox="0 0 6 3.6"><path d="M0 0H6L3 3.6Z" fill="#aab0b8"/></svg>
<div class="t" style="left:537.0px;top:31.2px;font-size:11.6px;line-height:11.6px;color:#ffffff;transform:scaleX(0.891);transform-origin:0 0;-webkit-text-stroke:0">SOLID</div>
<div class="t" style="left:614.0px;top:31.2px;font-size:11.6px;line-height:11.6px;color:#e6e9ed;transform:scaleX(0.858);transform-origin:0 0;-webkit-text-stroke:0">SURFACE</div>
<div class="t" style="left:712.0px;top:31.2px;font-size:11.6px;line-height:11.6px;color:#e6e9ed;transform:scaleX(0.835);transform-origin:0 0;-webkit-text-stroke:0">MESH</div>
<div class="t" style="left:790.0px;top:31.2px;font-size:11.6px;line-height:11.6px;color:#e6e9ed;transform:scaleX(0.855);transform-origin:0 0;-webkit-text-stroke:0">SHEET METAL</div>
<div class="t" style="left:913.0px;top:31.2px;font-size:11.6px;line-height:11.6px;color:#e6e9ed;transform:scaleX(0.869);transform-origin:0 0;-webkit-text-stroke:0">PLASTIC</div>
<div class="t" style="left:1007.0px;top:31.2px;font-size:11.6px;line-height:11.6px;color:#e6e9ed;transform:scaleX(0.875);transform-origin:0 0;-webkit-text-stroke:0">MANAGE</div>
<div class="t" style="left:1099.0px;top:31.2px;font-size:11.6px;line-height:11.6px;color:#e6e9ed;transform:scaleX(0.813);transform-origin:0 0;-webkit-text-stroke:0">UTILITIES</div>
<div class="abs" style="left:524.5px;top:46.5px;width:57px;height:3px;background:#e9eaec;border-radius:1px"></div>
<div class="t" style="left:620.5px;top:92.8px;font-size:11.8px;line-height:11.8px;color:#eceef1;transform:scaleX(0.813);transform-origin:0 0;-webkit-text-stroke:0">CREATE</div>
<svg class="abs" style="left:663.0px;top:95.2px" width="6" height="3.6" viewBox="0 0 6 3.6"><path d="M0 0H6L3 3.6Z" fill="#aab0b8"/></svg>
<div class="t" style="left:890.3px;top:92.8px;font-size:11.8px;line-height:11.8px;color:#eceef1;transform:scaleX(0.835);transform-origin:0 0;-webkit-text-stroke:0">MODIFY</div>
<svg class="abs" style="left:934.0px;top:95.2px" width="6" height="3.6" viewBox="0 0 6 3.6"><path d="M0 0H6L3 3.6Z" fill="#aab0b8"/></svg>
<div class="t" style="left:1108.0px;top:92.8px;font-size:11.8px;line-height:11.8px;color:#eceef1;transform:scaleX(0.860);transform-origin:0 0;-webkit-text-stroke:0">ASSEMBLE</div>
<svg class="abs" style="left:1168.0px;top:95.2px" width="6" height="3.6" viewBox="0 0 6 3.6"><path d="M0 0H6L3 3.6Z" fill="#aab0b8"/></svg>
<div class="t" style="left:1250.0px;top:92.8px;font-size:11.8px;line-height:11.8px;color:#eceef1;transform:scaleX(0.819);transform-origin:0 0;-webkit-text-stroke:0">CONFIGURE</div>
<svg class="abs" style="left:1314.0px;top:95.2px" width="6" height="3.6" viewBox="0 0 6 3.6"><path d="M0 0H6L3 3.6Z" fill="#aab0b8"/></svg>
<div class="t" style="left:1351.0px;top:92.8px;font-size:11.8px;line-height:11.8px;color:#eceef1;transform:scaleX(0.837);transform-origin:0 0;-webkit-text-stroke:0">CONSTRUCT</div>
<svg class="abs" style="left:1418.0px;top:95.2px" width="6" height="3.6" viewBox="0 0 6 3.6"><path d="M0 0H6L3 3.6Z" fill="#aab0b8"/></svg>
<div class="t" style="left:1457.0px;top:92.8px;font-size:11.8px;line-height:11.8px;color:#eceef1;transform:scaleX(0.813);transform-origin:0 0;-webkit-text-stroke:0">INSPECT</div>
<svg class="abs" style="left:1504.0px;top:95.2px" width="6" height="3.6" viewBox="0 0 6 3.6"><path d="M0 0H6L3 3.6Z" fill="#aab0b8"/></svg>
<div class="t" style="left:1548.6px;top:92.8px;font-size:11.8px;line-height:11.8px;color:#eceef1;transform:scaleX(0.813);transform-origin:0 0;-webkit-text-stroke:0">INSERT</div>
<svg class="abs" style="left:1589.0px;top:95.2px" width="6" height="3.6" viewBox="0 0 6 3.6"><path d="M0 0H6L3 3.6Z" fill="#aab0b8"/></svg>
<div class="t" style="left:1636.0px;top:92.8px;font-size:11.8px;line-height:11.8px;color:#eceef1;transform:scaleX(0.823);transform-origin:0 0;-webkit-text-stroke:0">SELECT</div>
<svg class="abs" style="left:1677.0px;top:95.2px" width="6" height="3.6" viewBox="0 0 6 3.6"><path d="M0 0H6L3 3.6Z" fill="#aab0b8"/></svg>
<div class="abs" style="left:779.0px;top:52px;width:1.5px;height:51px;background:#4f5766"></div>
<div class="abs" style="left:1048.2px;top:52px;width:1.5px;height:51px;background:#4f5766"></div>
<div class="abs" style="left:1231.0px;top:52px;width:1.5px;height:51px;background:#4f5766"></div>
<div class="abs" style="left:1334.0px;top:52px;width:1.5px;height:51px;background:#4f5766"></div>
<div class="abs" style="left:1438.2px;top:52px;width:1.5px;height:51px;background:#4f5766"></div>
<div class="abs" style="left:1522.2px;top:52px;width:1.5px;height:51px;background:#4f5766"></div>
<div class="abs" style="left:1619.2px;top:52px;width:1.5px;height:51px;background:#4f5766"></div>
<svg class="abs" style="left:523px;top:53px" width="32" height="32" viewBox="0 0 32 32"><g stroke="#e8e8e8" stroke-width="1.2" fill="none"><path d="M2 4V29M4 2H28M30 4V18M4 30H18"/><path d="M8.5 10V20M10 8.5H20"/><path d="M19.5 11 C19.5 16 16 19.5 11 19.5"/></g><g fill="#e8e8e8"><rect x="0.5" y="0.5" width="3" height="3"/><rect x="28.5" y="0.5" width="3" height="3"/><rect x="0.5" y="28.5" width="3" height="3"/><rect x="7" y="7" width="3" height="3"/><rect x="19" y="7" width="3" height="3"/><rect x="7" y="19" width="3" height="3"/></g><path d="M21.5 17H26.5V22H31.5V27H26.5V32H21.5V27H16.5V22H21.5Z" fill="#56c66a"/></svg>
<svg class="abs" style="left:566px;top:53px" width="32" height="32" viewBox="0 0 32 32"><polygon points="1,8 7,1 24,1 18,8" fill="#b9e2fc"/><polygon points="1,8 18,8 18,26 1,26" fill="#8dcbf8"/><polygon points="18,8 24,1 24,20 18,26" fill="#5eaeea"/><polygon points="1,26 18,26 18,32 1,32" fill="#dadada"/><polygon points="18,26 24,20 24,26 18,32" fill="#b9b9b9"/><path d="M28 26V4" stroke="#fff" stroke-width="1.5"/><path d="M25 6L28 1L31 6Z" fill="#fff"/></svg>
<svg class="abs" style="left:608px;top:53px" width="32" height="32" viewBox="0 0 32 32"><path d="M1 12 C10 4 24 4 31 12 V22 C24 15 10 15 1 22 Z" fill="#8dcbf8"/><path d="M1 12 C10 4 24 4 31 12 L26 16 C20 11 12 11 6 16 Z" fill="#b9e2fc"/><path d="M1 12 L6 16 V31 L1 23Z" fill="#5eaeea"/><path d="M6 16 C12 11 20 11 26 16 V31 C20 26 12 26 6 31Z" fill="#8dcbf8"/><path d="M26 16 L31 12 V23 L26 31Z" fill="#dadada"/><path d="M3 7 C11 0 22 0 30 6" stroke="#fff" stroke-width="1.3" fill="none"/><path d="M1 8.5 L6 3.5 L7 9Z" fill="#fff"/></svg>
<svg class="abs" style="left:652px;top:53px" width="32" height="32" viewBox="0 0 32 32"><polygon points="1,9 9,1 32,1 24,9" fill="#f0f0f0"/><polygon points="1,9 24,9 24,32 1,32" fill="#dadada"/><polygon points="24,9 32,1 32,24 24,32" fill="#b9b9b9"/><circle cx="12.5" cy="20.5" r="7.5" fill="#3a4150"/><path d="M5.5 20.5 A7 7 0 0 0 19.5 22 A8 8 0 0 1 12 13.5 A7 7 0 0 0 5.5 20.5Z" fill="#8dcbf8"/></svg>
<svg class="abs" style="left:695px;top:55px" width="28" height="28" viewBox="0 0 28 28"><g stroke="#e2e2e2" stroke-width="1.2"><path d="M7 4H21M3.5 8V24M7 28H21"/></g><rect x="0" y="0" width="7" height="7" fill="#d8d8d8"/><rect x="21" y="0" width="7" height="7" fill="#8dcbf8"/><rect x="0" y="21" width="7" height="7" fill="#8dcbf8"/><rect x="21" y="21" width="7" height="7" fill="#8dcbf8"/></svg>
<svg class="abs" style="left:737px;top:53px" width="32" height="32" viewBox="0 0 32 32"><path d="M4 6 Q4 3 8 3 H22 L28 8 V27 Q28 31 24 31 H6 Q1 31 1 27 V10 Q1 6 4 6Z" fill="#c69bf7"/><path d="M22 3 L28 8 V27 L24 31 V12 Z" fill="#a57fe0"/><path d="M1 19H24M12 8V31" stroke="#9a70d8" stroke-width="0.8"/><path d="M24 0 L25.5 5 L30 2.5 L27.5 7 L32 8.5 L27.5 10 L30 14.5 L25.5 12 L24 17 L22.5 12 L18 14.5 L20.5 10 L16 8.5 L20.5 7 L18 2.5 L22.5 5Z" fill="#f7c95c"/></svg>
<svg class="abs" style="left:793px;top:53px" width="32" height="32" viewBox="0 0 32 32"><polygon points="1,6 6,1 10,1 5,6" fill="#f0f0f0"/><polygon points="1,6 5,6 5,32 1,32" fill="#dadada"/><polygon points="5,6 10,1 17,1 12,6" fill="#b9e2fc"/><polygon points="5,6 12,6 12,32 5,32" fill="#8dcbf8"/><polygon points="12,6 17,1 17,27 12,32" fill="#5eaeea"/><path d="M18 16H27" stroke="#fff" stroke-width="1.3"/><path d="M26 13 L31 16 L26 19Z" fill="#fff"/></svg>
<svg class="abs" style="left:834px;top:53px" width="32" height="32" viewBox="0 0 32 32"><path d="M1 10 L9 1 H18 C26 1 32 7 32 16 L24 23 V32 H1Z" fill="#dadada"/><path d="M9 1 H18 C26 1 32 7 32 16 L24 23 C24 14 18 9 11 9 Z" fill="#8dcbf8"/><path d="M24 23 L32 16 V24 L24 32Z" fill="#b9b9b9"/></svg>
<svg class="abs" style="left:878px;top:53px" width="32" height="32" viewBox="0 0 32 32"><polygon points="1,9 9,1 32,1 24,9" fill="#f0f0f0"/><polygon points="1,9 24,9 24,32 1,32" fill="#dadada"/><polygon points="24,9 32,1 32,24 24,32" fill="#b9b9b9"/><rect x="5" y="13" width="15" height="15" fill="#3a4150"/><polygon points="6,14 19,14 19,27 6,27" fill="#b9e2fc"/><polygon points="6,14 12,14 12,21 6,27" fill="#5eaeea"/><rect x="12" y="14" width="7" height="7" fill="#3a4150"/></svg>
<svg class="abs" style="left:921px;top:53px" width="32" height="32" viewBox="0 0 32 32"><polygon points="1,16 7,10 17,10 11,16" fill="#b9e2fc"/><polygon points="1,16 11,16 11,32 1,32" fill="#8dcbf8"/><polygon points="11,1 17,-5 27,-5" fill="#b9e2fc"/><polygon points="11,6 17,0 32,0 26,6" fill="#b9e2fc"/><polygon points="11,6 26,6 26,22 17,22 17,32 11,32 11,16" fill="#8dcbf8"/><polygon points="26,6 32,0 32,16 26,22" fill="#5eaeea"/><polygon points="17,22 26,22 17,32" fill="#5eaeea"/></svg>
<svg class="abs" style="left:964px;top:53px" width="32" height="32" viewBox="0 0 32 32"><polygon points="1,7 7,1 32,1 26,7" fill="#b9e2fc"/><polygon points="1,7 26,7 26,17 1,17" fill="#8dcbf8"/><polygon points="26,7 32,1 32,11 26,17" fill="#5eaeea"/><path d="M0 20.5 H26 L32 14.5" stroke="#5eaeea" stroke-width="2" fill="none"/><polygon points="1,23 26,23 26,32 1,32" fill="#dadada"/><polygon points="26,23 32,17 32,26 26,32" fill="#b9b9b9"/></svg>
<svg class="abs" style="left:1007px;top:53px" width="32" height="32" viewBox="0 0 32 32"><path d="M16 0 L21 6 H17.5 V14.5 H26 V11 L32 16 L26 21 V17.5 H17.5 V26 H21 L16 32 L11 26 H14.5 V17.5 H6 V21 L0 16 L6 11 V14.5 H14.5 V6 H11Z" fill="#fff"/></svg>
<svg class="abs" style="left:1058px;top:51px" width="36" height="36" viewBox="1058 51 36 36"><polygon points="1065.1,65.2 1073,57 1090.9,57 1083.1,65.2" fill="#f2f2f2"/><rect x="1065.1" y="65.2" width="18" height="17.7" fill="#dcdcdc"/><polygon points="1083.1,65.2 1090.9,57 1090.9,75 1083.1,82.9" fill="#bdbdbd"/><path d="M1060.9,56.5 H1069 V53 L1079.7,59.5 L1069,66 V62.5 H1060.9 Z" fill="#6cc0f5"/><g transform="rotate(-45 1084.2 77.7)"><rect x="1076.2" y="75.2" width="9" height="5.2" rx="2.6" fill="none" stroke="#3a4150" stroke-width="4"/><rect x="1083.2" y="75.2" width="9" height="5.2" rx="2.6" fill="none" stroke="#3a4150" stroke-width="4"/><rect x="1076.2" y="75.2" width="9" height="5.2" rx="2.6" fill="none" stroke="#fff" stroke-width="1.8"/><rect x="1083.2" y="75.2" width="9" height="5.2" rx="2.6" fill="none" stroke="#fff" stroke-width="1.8"/></g></svg>
<svg class="abs" style="left:1103px;top:53px" width="32" height="32" viewBox="0 0 32 32"><polygon points="1,7 6,2 18,2 13,7" fill="#b9e2fc"/><polygon points="1,7 13,7 13,19 1,19" fill="#5aa9e6"/><polygon points="13,7 18,2 18,14 13,19" fill="#4d98d6"/><rect x="1" y="20" width="12" height="12" fill="#dadada"/><polygon points="14,20 18,16 27,16 23,20" fill="#f0f0f0"/><rect x="14" y="20" width="10" height="12" fill="#dadada"/><polygon points="24,20 28,16 28,28 24,32" fill="#b9b9b9"/><path d="M24 0 L25.3 4.5 L29.5 2.3 L27.3 6.5 L31.8 7.8 L27.3 9.1 L29.5 13.3 L25.3 11.1 L24 15.6 L22.7 11.1 L18.5 13.3 L20.7 9.1 L16.2 7.8 L20.7 6.5 L18.5 2.3 L22.7 4.5Z" fill="#f5a623"/></svg>
<svg class="abs" style="left:1146px;top:53px" width="32" height="32" viewBox="0 0 32 32"><rect x="0" y="17" width="13" height="13" fill="#dadada"/><path d="M15.5 2 V30" stroke="#e0665e" stroke-width="1.3"/><rect x="18" y="1" width="13" height="13" fill="#8dcbf8"/></svg>
<svg class="abs" style="left:1186px;top:51px" width="38" height="36" viewBox="1186 51 38 36"><rect x="1189.8" y="53" width="6.3" height="5.9" fill="#8dcbf8"/><rect x="1189.8" y="60.3" width="6.3" height="5.5" fill="#d8d8d8"/><rect x="1197.1" y="60.3" width="5.9" height="5.5" fill="#d8d8d8"/><path d="M1195.4,67.2 V82.9 M1195.4,70.4 H1203 M1195.4,75.4 H1203 M1195.4,80.4 H1203" stroke="#c8c8c8" stroke-width="1"/><rect x="1205.1" y="61" width="17" height="24" fill="#8e8e8e"/><rect x="1205.1" y="61" width="17" height="3.6" fill="#a6a6a6"/><rect x="1205.1" y="65.0" width="17" height="3.2" fill="#d6d6d6"/><rect x="1205.1" y="69.0" width="17" height="3.2" fill="#d6d6d6"/><rect x="1205.1" y="73.0" width="17" height="3.2" fill="#d6d6d6"/><rect x="1205.1" y="77.0" width="17" height="3.2" fill="#d6d6d6"/><rect x="1205.1" y="81.0" width="17" height="3.2" fill="#d6d6d6"/><rect x="1209.3" y="64.6" width="0.8" height="20.4" fill="#8e8e8e"/><rect x="1206" y="62.2" width="2" height="1" fill="#555"/></svg>
<svg class="abs" style="left:1245px;top:51px" width="80" height="36" viewBox="1245 51 80 36"><path d="M1248,60 L1254,54 L1274.3,54 L1274.3,80.4 L1248,80.4 Z" fill="#8b8f98"/><path d="M1248,60 L1254,54 L1274.3,54 L1274.3,60 Z" fill="#9ca0a7"/><rect x="1264.5" y="75" width="14.5" height="2" fill="#5b6069"/><rect x="1264.5" y="81" width="14.5" height="2" fill="#5b6069"/><rect x="1267.3" y="72.2" width="2.8" height="7" fill="#1e7fc8" stroke="#2a2f38" stroke-width="0.8"/><rect x="1273.5" y="78.5" width="2.4" height="6.5" fill="#5b6069"/><circle cx="1271.1" cy="61.1" r="7.9" fill="#1e8fe0"/><path d="M1271.5,55.1 L1275.1,59.5 L1273.0,59.5 C1273.0,63.6 1271.6,66.1 1268.3999999999999,66.9 C1269.8999999999999,65.1 1270.1999999999998,62.6 1270.0,59.5 L1267.8999999999999,59.5 Z" fill="#fff"/><rect x="1290.4" y="53.2" width="29.2" height="27.9" fill="#8b8f98"/><rect x="1290.4" y="53.2" width="29.2" height="4.2" fill="#5f646c"/><rect x="1292.5" y="54.4" width="2.8" height="1.2" fill="#8b8f98"/><g fill="#9ca0a7" stroke="#5f646c" stroke-width="0.9"><rect x="1293.5" y="61.5" width="4.6" height="4.6"/><rect x="1298.6" y="61.5" width="4.6" height="4.6"/><rect x="1303.7" y="61.5" width="4.6" height="4.6"/><rect x="1293.5" y="66.6" width="4.6" height="4.6"/><rect x="1298.6" y="66.6" width="4.6" height="4.6"/><rect x="1303.7" y="66.6" width="9.7" height="4.6"/><rect x="1293.5" y="71.7" width="4.6" height="4.6"/><rect x="1298.6" y="71.7" width="4.6" height="4.6"/></g><rect x="1308" y="75" width="14.5" height="2" fill="#5b6069"/><rect x="1308" y="81" width="14.5" height="2" fill="#5b6069"/><rect x="1310.8" y="72.2" width="2.8" height="7" fill="#1e7fc8" stroke="#2a2f38" stroke-width="0.8"/><rect x="1317" y="78.5" width="2.4" height="6.5" fill="#5b6069"/><circle cx="1313.9" cy="61.1" r="7.9" fill="#1e8fe0"/><path d="M1314.3000000000002,55.1 L1317.9,59.5 L1315.8000000000002,59.5 C1315.8000000000002,63.6 1314.4,66.1 1311.2,66.9 C1312.7,65.1 1313.0,62.6 1312.8000000000002,59.5 L1310.7,59.5 Z" fill="#fff"/></svg>
<svg class="abs" style="left:1372px;top:53px" width="32" height="32" viewBox="0 0 32 32"><polygon points="0.9,8.8 10.1,-0.1 17.3,-0.1 9.1,8.8" fill="#f2f2f2"/><rect x="0.9" y="8.8" width="8.2" height="22.1" fill="#dcdcdc"/><polygon points="9.8,9.1 18.7,0.2 18.7,22.4 9.8,30.9" fill="#7dd79a" stroke="#2f3540" stroke-width="0.9"/><polygon points="21.6,8.8 30.9,0.2 30.9,22.4 21.6,30.9" fill="#f4b183"/></svg>
<svg class="abs" style="left:1462px;top:50px" width="160" height="40" viewBox="1462 50 160 40"><path d="M1468.3,60 V69 M1495.4,60 V69 M1469.5,64.6 H1494.2" stroke="#e8e8e8" stroke-width="1.1" fill="none"/><path d="M1469.2,64.6 L1473,62.2 V67 Z M1494.5,64.6 L1490.7,62.2 V67 Z" fill="#e8e8e8"/><rect x="1468" y="70" width="28" height="5.8" fill="#f8d27a"/><path d="M1469.5,70 V72.5M1472.6,70 V71.5M1475.7,70 V72.5M1478.8,70 V71.5M1481.9,70 V72.5M1485.0,70 V71.5M1488.1,70 V72.5M1491.2,70 V71.5M1494.3,70 V72.5" stroke="#c9a24a" stroke-width="0.8"/><path d="M1537.5,55.5 Q1537.5,53.9 1539,53.9 H1559.5 Q1561,53.9 1561,55.5 V61.8 H1537.5 Z" fill="#8dcbf8"/><rect x="1537.5" y="53.9" width="6" height="7.9" fill="#b9e2fc"/><rect x="1555" y="53.9" width="6" height="7.9" fill="#6ab4ea"/><path d="M1542.2,61.8 H1555.7 V83 Q1555.7,84.6 1554,84.6 H1544 Q1542.2,84.6 1542.2,83 Z" fill="#8dcbf8"/><path d="M1542.5,65.0 H1555.5M1542.5,67.6 H1555.5M1542.5,70.2 H1555.5M1542.5,72.8 H1555.5M1542.5,75.4 H1555.5M1542.5,78.0 H1555.5M1542.5,80.6 H1555.5M1542.5,83.2 H1555.5" stroke="#6ab4ea" stroke-width="0.9"/><path d="M1557.5,71.1 H1562.5 V75.6 H1567 V80.1 H1562.5 V84.6 H1557.5 V80.1 H1553 V75.6 H1557.5 Z" fill="#5ad07a"/><rect x="1579" y="53.9" width="29" height="28.9" fill="#8cbfe4"/><path d="M1579,82.8 V72 L1586.5,65 Q1588.3,63.6 1590,65.5 L1596,73.5 L1600,70 Q1601.5,68.8 1603,70.5 L1608,76 V82.8 Z" fill="#4f8fc0"/><circle cx="1601.7" cy="61.8" r="2.9" fill="#f8e08a"/></svg>
<div class="abs" style="left:1638px;top:49px;width:35px;height:35px;background:#364b60;border:2px solid #2f5876;border-radius:3px"></div>
<svg class="abs" style="left:1636px;top:48px" width="44" height="42" viewBox="1636 48 44 42"><rect x="1642.6" y="54" width="26.4" height="20.3" stroke="#5ad07a" stroke-width="1.2" stroke-dasharray="3.2,1.8" fill="none"/><path d="M1663.5,66.8 V81.5 L1666.8,78.4 L1669.5,84.5 L1672,83.4 L1669.4,77.3 L1674,77.2 Z" fill="#fff" stroke="#364b60" stroke-width="0.7"/></svg><!-- BROWSER -->
<div class="abs" style="left:390px;top:115px;width:300px;height:25px;background:#3b4250"></div>
<svg class="abs" style="left:396px;top:123px" width="9" height="8" viewBox="0 0 9 8"><path d="M4 0 V8 L0 4Z M9 0 V8 L5 4Z" fill="#7d838d"/></svg>
<div class="t" style="left:418px;top:120px;font-size:12px;line-height:15px;letter-spacing:0.6px;color:#d4d8de;transform:scaleX(0.86);transform-origin:0 0">BROWSER</div>
<div class="abs" style="left:667px;top:126px;width:9px;height:2px;background:#b9bdc3"></div>
<!-- row toy block -->
<div class="abs" style="left:400px;top:142px;width:177px;height:26px;background:rgba(255,255,255,0.4)"></div>
<div class="abs" style="left:417px;top:166px;width:180px;height:26px;background:rgba(255,255,255,0.4)"></div>
<div class="abs" style="left:417px;top:190px;width:148px;height:26px;background:rgba(255,255,255,0.4)"></div>
<div class="abs" style="left:417px;top:214px;width:133px;height:26px;background:rgba(255,255,255,0.4)"></div>
<div class="abs" style="left:417px;top:238px;width:161px;height:26px;background:rgba(255,255,255,0.4)"></div>

<svg class="abs" style="left:405px;top:150px" width="14" height="11" viewBox="0 0 14 11"><path d="M2 2.2 L7 7.6 L12 2.2" stroke="#3a3d44" stroke-width="3.4" fill="none" stroke-linejoin="miter"/><path d="M2 2.2 L7 7.6 L12 2.2" stroke="#ffffff" stroke-width="1.3" fill="none" stroke-linejoin="miter"/></svg>
<div class="abs" style="left:426px;top:145px;width:148px;height:20px;background:#3b4250"></div>
<div class="abs" style="left:451px;top:145px;width:98px;height:20px;background:#222731"></div>
<svg class="abs" style="left:428.5px;top:149px" width="17" height="12" viewBox="0 0 17 12"><path d="M1 6 C4.5 0.5 11.5 0.5 16 6 C11.5 11.5 4.5 11.5 1 6Z" fill="#d3d3d3"/><circle cx="8.3" cy="6" r="2.6" fill="none" stroke="#3b4250" stroke-width="1.1"/><circle cx="8.3" cy="6" r="1.9" fill="#c4c4c4"/></svg>
<svg class="abs" style="left:453px;top:146px" width="18" height="17" viewBox="0 0 18 17"><polygon points="1,2.5 2.5,1 9,1 7.5,2.5" fill="#b8e2fc"/><polygon points="1,2.5 7.5,2.5 7.5,9 1,9" fill="#8dcbf8"/><polygon points="7.5,2.5 9,1 9,7.5 7.5,9" fill="#5eaeea"/><rect x="1" y="10" width="6" height="6" fill="#dcdcdc"/><polygon points="8,9.5 9.5,8 16,8 14.5,9.5" fill="#f0f0f0"/><polygon points="8,9.5 14.5,9.5 14.5,16 8,16" fill="#dcdcdc"/><polygon points="14.5,9.5 16,8 16,14.5 14.5,16" fill="#b9b9b9"/></svg>
<div class="t" style="left:484px;top:147px;font-size:11.6px;line-height:16px;font-weight:bold;color:#ffffff">Toy Block</div>
<svg class="abs" style="left:552px;top:148px" width="14" height="14" viewBox="0 0 14 14"><circle cx="7" cy="7" r="5" stroke="#ffffff" stroke-width="2.8" fill="none"/></svg>
<!-- child rows -->
<div class="abs" style="left:444px;top:169px;width:150px;height:20px;background:#3b4250"></div>
<div class="abs" style="left:444px;top:193px;width:118px;height:20px;background:#3b4250"></div>
<div class="abs" style="left:444px;top:217px;width:103px;height:20px;background:#3b4250"></div>
<div class="abs" style="left:444px;top:241px;width:131px;height:20px;background:#3b4250"></div>
<svg class="abs" style="left:425px;top:172px" width="12" height="86" viewBox="0 0 12 86"><path d="M4 2.2 L9 7 L4 11.8" stroke="#3a3d44" stroke-width="3.4" fill="none"/><path d="M4 2.2 L9 7 L4 11.8" stroke="#ffffff" stroke-width="1.3" fill="none"/><path d="M4 26.2 L9 31 L4 35.8" stroke="#3a3d44" stroke-width="3.4" fill="none"/><path d="M4 26.2 L9 31 L4 35.8" stroke="#ffffff" stroke-width="1.3" fill="none"/><path d="M4 50.2 L9 55 L4 59.8" stroke="#3a3d44" stroke-width="3.4" fill="none"/><path d="M4 50.2 L9 55 L4 59.8" stroke="#ffffff" stroke-width="1.3" fill="none"/><path d="M4 74.2 L9 79 L4 83.8" stroke="#3a3d44" stroke-width="3.4" fill="none"/><path d="M4 74.2 L9 79 L4 83.8" stroke="#ffffff" stroke-width="1.3" fill="none"/></svg>
<svg class="abs" style="left:447px;top:171px" width="16" height="16" viewBox="0 0 16 16"><path d="M5.85,2.18 L5.85,0.29 L10.15,0.29 L10.15,2.18 A6.2,6.2 0 0 1 11.96,3.23 L13.60,2.29 L15.75,6.01 L14.11,6.95 A6.2,6.2 0 0 1 14.11,9.05 L15.75,9.99 L13.60,13.71 L11.96,12.77 A6.2,6.2 0 0 1 10.15,13.82 L10.15,15.71 L5.85,15.71 L5.85,13.82 A6.2,6.2 0 0 1 4.04,12.77 L2.40,13.71 L0.25,9.99 L1.89,9.05 A6.2,6.2 0 0 1 1.89,6.95 L0.25,6.01 L2.40,2.29 L4.04,3.23 A6.2,6.2 0 0 1 5.85,2.18Z M10.80,8.00 A2.8,2.8 0 1 0 5.20,8.00 A2.8,2.8 0 1 0 10.80,8.00 Z" fill="#a3a7b0" fill-rule="evenodd"/></svg>
<div class="t" style="left:477px;top:171px;font-size:10.7px;line-height:16px;color:#f0f2f4">Document Settings</div>
<svg class="abs" style="left:447px;top:196px" width="17" height="15" viewBox="0 0 17 15"><path d="M0 0 H6 L7 1.5 V2.5 H0Z" fill="#cfd1d4"/><rect x="0" y="3" width="16" height="11.5" fill="#d6d8db"/></svg>
<div class="t" style="left:477px;top:195px;font-size:10.7px;line-height:16px;color:#f0f2f4">Named Views</div>
<svg class="abs" style="left:446px;top:220px" width="17" height="14" viewBox="0 0 17 14"><path d="M1 7 C4 2.5 13 2.5 16 7 C13 11.5 4 11.5 1 7Z" stroke="#aeb2b8" stroke-width="1.1" fill="none"/><circle cx="8.5" cy="7" r="2.2" stroke="#aeb2b8" stroke-width="1.1" fill="none"/><path d="M3 1 L13 13" stroke="#aeb2b8" stroke-width="1.1"/></svg>
<svg class="abs" style="left:472px;top:220px" width="17" height="15" viewBox="0 0 17 15"><path d="M0 0 H6 L7 1.5 V2.5 H0Z" fill="#cfd1d4"/><rect x="0" y="3" width="16" height="11.5" fill="#d6d8db"/></svg>
<div class="t" style="left:502px;top:219px;font-size:10.7px;line-height:16px;color:#f0f2f4">Origin</div>
<svg class="abs" style="left:446.5px;top:245px" width="17" height="12" viewBox="0 0 17 12"><path d="M1 6 C4.5 0.5 11.5 0.5 16 6 C11.5 11.5 4.5 11.5 1 6Z" fill="#d3d3d3"/><circle cx="8.3" cy="6" r="2.6" fill="none" stroke="#3b4250" stroke-width="1.1"/><circle cx="8.3" cy="6" r="1.9" fill="#c4c4c4"/></svg>
<svg class="abs" style="left:471px;top:242px" width="18" height="19" viewBox="0 0 18 19"><polygon points="4,7 8,4 17,4 13,7" fill="#b9e2fc"/><polygon points="4,7 13,7 13,18 4,18" fill="#8dcbf8"/><polygon points="13,7 17,4 17,15 13,18" fill="#5eaeea"/><g stroke="#fff" stroke-width="1.1" fill="none"><circle cx="5" cy="2.2" r="1.3"/><path d="M5 3.5 V10 M2.5 5.5 H7.5 M1.5 8 C2 10 8 10 8.5 8"/></g></svg>
<div class="t" style="left:502px;top:243px;font-size:10.7px;line-height:16px;color:#f0f2f4">2x8 Block:1</div>
<!-- VIEWCUBE -->
<svg class="abs" style="left:2420px;top:120px" width="99" height="120" viewBox="2420 120 99 120">
 <defs><radialGradient id="vcsh" cx="0.5" cy="0.5" r="0.5"><stop offset="0" stop-color="#000" stop-opacity="0.18"/><stop offset="1" stop-color="#000" stop-opacity="0"/></radialGradient></defs>
 <ellipse cx="2488" cy="206" rx="36" ry="22" fill="url(#vcsh)"/>
 <polygon points="2482,139 2448,153 2482.6,173.6 2517,154" fill="#ececec" stroke="#6a6a6a" stroke-width="0.8" stroke-dasharray="1.6,0.8"/>
 <polygon points="2448,153 2482.6,173.6 2482.6,214 2451,193" fill="#e4e4e4" stroke="#6a6a6a" stroke-width="0.8"/>
 <polygon points="2482.6,173.6 2517,154 2514,192.4 2482.6,214" fill="#dedede" stroke="#6a6a6a" stroke-width="0.8"/>
 <path d="M2446 147 L2451 193" stroke="#3a3ae8" stroke-width="2"/>
 <path d="M2451 193 L2488 221" stroke="#f08a8a" stroke-width="2.2"/>
 <text x="2440" y="144" font-family="Liberation Sans" font-size="11" fill="#7777ee">Z</text>
 <text x="2489" y="230" font-family="Liberation Sans" font-size="11.5" fill="#f07a7a">X</text>
 <text transform="translate(2471 153) rotate(27) skewX(-20)" font-family="Liberation Sans" font-size="8" fill="#8a8e94">TOP</text>
 <text transform="translate(2454 172) rotate(30) skewY(0)" font-family="Liberation Sans" font-size="8.5" fill="#8a8e94">FRONT</text>
 <text transform="translate(2489 198) rotate(-28)" font-family="Liberation Sans" font-size="8.5" fill="#8a8e94">RIGHT</text>
</svg>

</div>
</body></html>
